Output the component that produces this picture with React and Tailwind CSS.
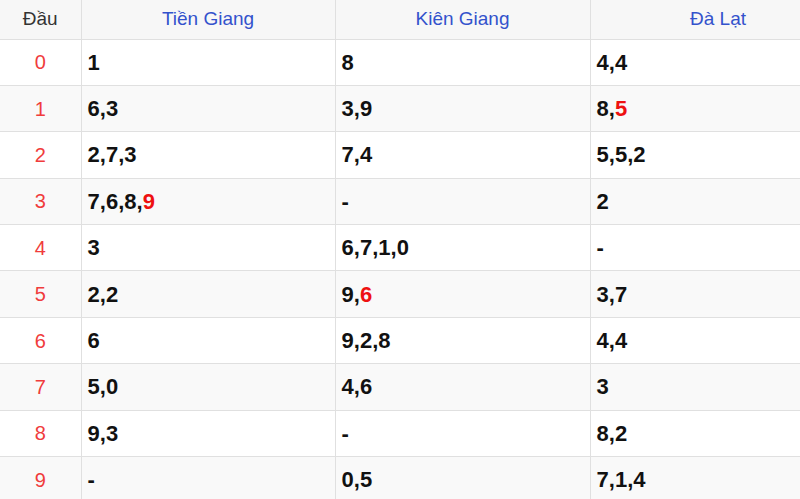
const heads = ['Tiền Giang', 'Kiên Giang', 'Đà Lạt'];

// mỗi ô: mảng số, số cuối có thể tô đỏ bằng dấu '*'
const rows = [
  ['1', '8', '4,4'],
  ['6,3', '3,9', '8,*5'],
  ['2,7,3', '7,4', '5,5,2'],
  ['7,6,8,*9', '-', '2'],
  ['3', '6,7,1,0', '-'],
  ['2,2', '9,*6', '3,7'],
  ['6', '9,2,8', '4,4'],
  ['5,0', '4,6', '3'],
  ['9,3', '-', '8,2'],
  ['-', '0,5', '7,1,4'],
];

function Cell({ value }) {
  const parts = value.split(',');
  return (
    <span>
      {parts.map((p, i) => (
        <span key={i}>
          {i > 0 && ','}
          {p.startsWith('*') ? <span className="text-[#ee1111]">{p.slice(1)}</span> : p}
        </span>
      ))}
    </span>
  );
}

export default function App() {
  return (
    <div className="w-[800px] h-[499px] overflow-hidden bg-white" style={{ fontFamily: '"Liberation Sans", Arial, sans-serif' }}>
      <table className="table-fixed w-[846px] border-collapse">
        <colgroup>
          <col className="w-[81px]" />
          <col className="w-[254px]" />
          <col className="w-[255px]" />
          <col className="w-[256px]" />
        </colgroup>
        <thead>
          <tr className="h-[39px] bg-[#f7f7f7]">
            <th className="font-normal text-[19px] text-[#333] text-center border-r border-b border-[#e0e0e0] p-0">Đầu</th>
            {heads.map((h) => (
              <th key={h} className="font-normal text-[19px] text-[#3352cc] text-center border-r border-b border-[#e0e0e0] p-0">
                {h}
              </th>
            ))}
          </tr>
        </thead>
        <tbody>
          {rows.map((r, i) => (
            <tr key={i} className={`h-[46.4px] ${i % 2 === 1 ? 'bg-[#f9f9f9]' : 'bg-white'}`}>
              <td className="text-center text-[20px] text-[#f03c3c] border-r border-b border-[#e0e0e0] p-0">{i}</td>
              {r.map((v, j) => (
                <td key={j} className="pl-[6px] text-[22px] font-bold text-[#111] border-r border-b border-[#e0e0e0] p-0">
                  <Cell value={v} />
                </td>
              ))}
            </tr>
          ))}
        </tbody>
      </table>
    </div>
  );
}
